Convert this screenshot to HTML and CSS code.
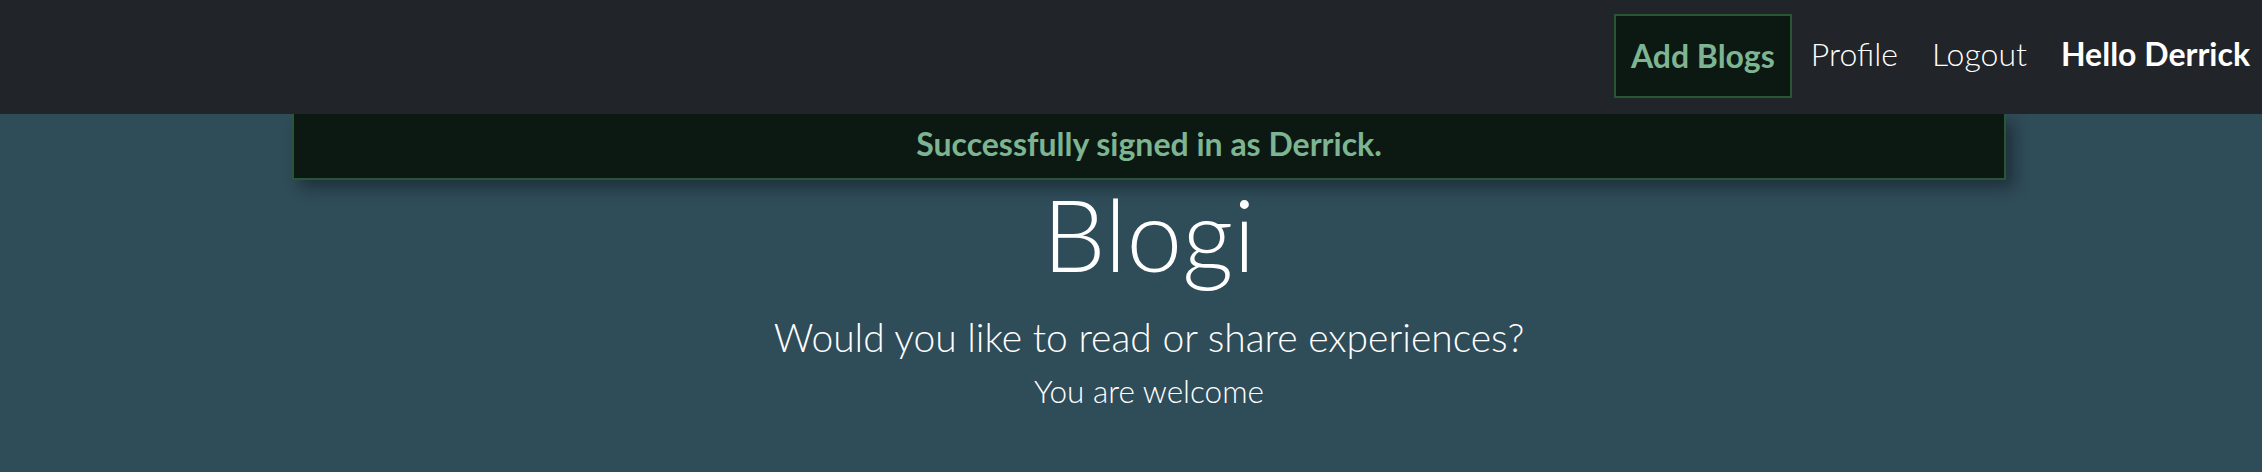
FILE: index.html
```html
<!DOCTYPE html>
<html lang="en">
<head>
<meta charset="utf-8">
<title>Blogi</title>
<link rel="stylesheet" href="styles.css">
</head>
<body>
<nav class="navbar">
  <a class="nav-link nav-add" href="#">Add Blogs</a>
  <a class="nav-link" href="#">Profile</a>
  <a class="nav-link" href="#">Logout</a>
  <span class="nav-link nav-hello">Hello Derrick</span>
</nav>
<div class="alert">Successfully signed in as Derrick.</div>
<main class="hero">
  <h1 class="hero-title">Blogi</h1>
  <p class="hero-lead">Would you like to read or share experiences?</p>
  <p class="hero-sub">You are welcome</p>
</main>
</body>
</html>
```
FILE: styles.css
```css
html, body {
  margin: 0;
  padding: 0;
}
body {
  background: #2f4c59;
  font-family: Lato, "Open Sans", "Liberation Sans", sans-serif;
  color: #ffffff;
  min-height: 472px;
}
.navbar {
  height: 114px;
  background: #212529;
  display: flex;
  justify-content: flex-end;
  align-items: center;
  padding-right: 12px;
  padding-bottom: 7px;
  box-sizing: border-box;
  position: relative;
  z-index: 2;
}
.nav-link {
  color: #ffffff;
  text-decoration: none;
  font-size: 32px;
  font-weight: 300;
  padding: 0 17px;
  line-height: 1;
}
.nav-add {
  height: 84px;
  box-sizing: border-box;
  display: flex;
  align-items: center;
  padding: 0 15px;
  margin-right: 2px;
  margin-top: 4px;
  border: 2px solid #2a5638;
  background: #0c1912;
  color: #7db592;
  font-weight: 700;
}
.nav-hello {
  font-weight: 700;
  padding-right: 0;
}
.alert {
  margin-left: 292px;
  width: 1714px;
  height: 66px;
  box-sizing: border-box;
  background: #0c1912;
  border: 2px solid #2a5638;
  border-top: none;
  box-shadow: 8px 8px 14px rgba(0, 0, 0, 0.35);
  display: flex;
  align-items: center;
  justify-content: center;
  color: #7db592;
  font-size: 32px;
  font-weight: 700;
  line-height: 1;
  padding-bottom: 4px;
  position: relative;
  z-index: 1;
}
.hero {
  margin-left: 292px;
  width: 1714px;
  text-align: center;
}
.hero-title {
  margin: 3px 0 0;
  font-size: 100px;
  font-weight: 300;
  line-height: 1;
}
.hero-lead {
  margin: 35px 0 0;
  font-size: 39px;
  font-weight: 300;
  line-height: 1;
}
.hero-sub {
  margin: 18.5px 0 0;
  font-size: 31.5px;
  font-weight: 300;
  line-height: 1;
}
```
